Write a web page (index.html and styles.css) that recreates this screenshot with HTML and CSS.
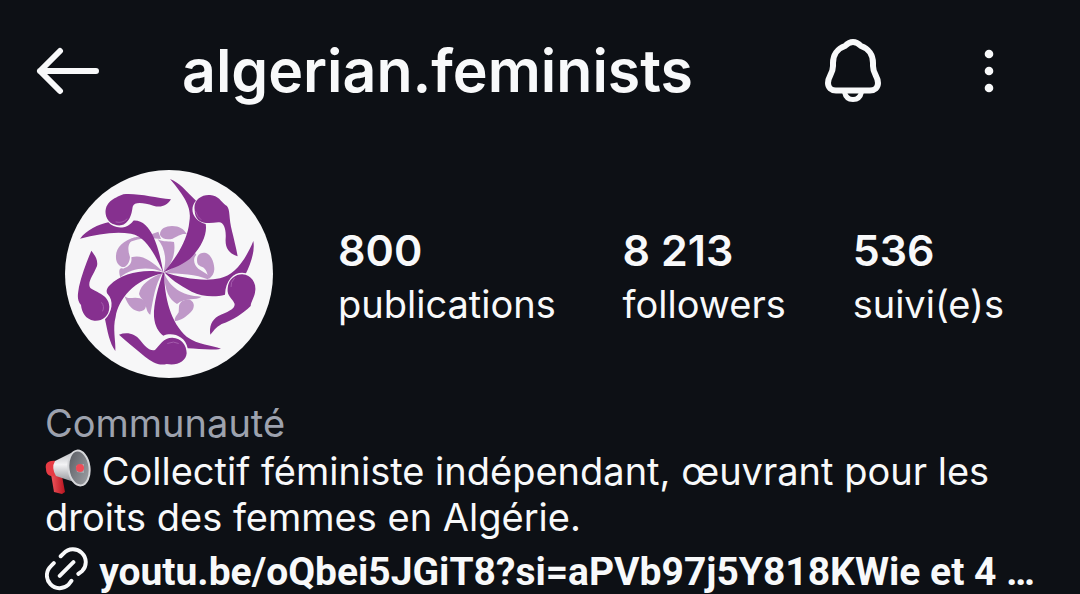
FILE: index.html
```html
<!DOCTYPE html>
<html lang="fr">
<head>
<meta charset="utf-8">
<meta name="viewport" content="width=device-width, initial-scale=1">
<title>algerian.feminists</title>
<link rel="stylesheet" href="styles.css">
</head>
<body>
<header class="topbar">
  <button class="icon-button" type="button" aria-label="Retour">
    <svg class="arrow" viewBox="0 0 64 48"><path d="M24 4 4 24l20 20M4 24h56"/></svg>
  </button>
  <h1 class="username">algerian.feminists</h1>
  <button class="icon-button bell-button" type="button" aria-label="Notifications">
    <svg class="bell" viewBox="0 0 56 64"><path d="M28 3c-3.500 0-5.500 1.500-8 4C12.500 9.500 8 16 8 24v3c0 8-5 10-5 17 0 4.500 3.500 7.500 8 7.500h34c4.500 0 8-3 8-7.500 0-7-5-9-5-17v-3c0-8-4.500-14.500-12-17-2.500-2.500-4.500-4-8-4z"/><path class="clapper" d="M19.500 53c1 5 4 7.500 8.500 7.500s7.500-2.500 8.500-7.500"/></svg>
  </button>
  <button class="icon-button" type="button" aria-label="Plus d’options">
    <svg class="dots" viewBox="0 0 12 44"><circle cx="6" cy="5" r="4.300"/><circle cx="6" cy="22" r="4.300"/><circle cx="6" cy="39" r="4.300"/></svg>
  </button>
</header>
<main class="profile">
  <section class="summary">
    <svg class="avatar" viewBox="30 30 624 624" role="img" aria-label="Photo de profil">
      <circle class="disc" cx="342" cy="342" r="312"/>
      <g class="petals">
        <path d="M325 338C336 300 331 265 308 238 325 247 344 243 357 246 363 280 350 315 325 338Z"/>
        <path d="M315 225C314 206 333 198 351 198 374 198 386 207 396 223 380 219 370 228 353 236 335 241 320 236 315 225Z"/>
        <path d="M329 338C365 322 380 290 420 278L424 284C413 295 416 315 430 326L468 350 458 358C425 342 375 342 329 338Z"/>
        <path d="M426 300C426 282 440 276 453 279 470 285 478 310 478 328 477 341 472 349 462 356 456 340 455 326 440 320 429 316 426 311 426 300Z"/>
        <path d="M327 340C344 378 376 408 440 410 422 423 392 410 366 432 342 418 330 395 327 340Z"/>
        <path d="M372 438C375 422 393 416 405 419 421 427 419 445 407 457 392 471 379 482 360 483 357 474 366 466 371 457Z"/>
        <path d="M322 340C300 375 296 412 286 464 276 458 275 445 271 434 264 417 253 409 252 401 258 373 285 354 322 340Z"/>
        <path d="M209 409C220 420 235 409 255 415 273 421 279 439 267 450 248 462 222 448 209 409Z"/>
        <path d="M324 335C282 319 228 321 196 352 191 336 191 321 204 326 222 321 232 310 229 292 260 282 289 302 324 335Z"/>
        <path d="M183 293C181 264 203 242 241 232 215 250 218 270 225 291 224 310 212 326 199 320 190 315 183 305 183 293Z"/>
        <path d="M214 251C225 235 245 227 264 232L310 215 318 237C280 232 245 234 214 251Z"/>
      </g>
      <g class="dancers">
        <path d="M345 57C372 66 395 95 423 122 402 145 412 181 452 192 458 222 438 265 404 297 375 320 345 326 325 338 365 292 398 240 403 185 409 150 400 121 345 57Z"/>
        <path d="M419 150C414 120 440 103 465 105 490 107 498 124 511 135 526 142 521 165 528 200 536 235 543 260 548 289 520 280 510 262 512 235 514 205 505 184 490 187 465 190 445 192 430 180 422 172 419 162 419 150Z"/>
        <path d="M75 236C95 210 130 193 160 187 178 207 215 210 235 182 262 180 280 200 295 230 311 265 318 300 325 338 300 285 275 230 228 221 180 213 130 222 75 236Z"/>
        <path d="M152 162C149 128 175 115 205 103 250 99 300 114 348 118 335 140 315 143 295 137 265 128 238 124 233 140 230 165 222 190 198 196 175 198 155 185 152 162Z"/>
        <path d="M325 338C270 325 200 340 165 375 151 388 155 398 158 402 177 422 172 456 150 478 157 510 163 550 181 573 183 545 172 505 182 470 190 420 235 359 325 340Z"/>
        <path d="M109 272C118 285 130 298 126 318 115 345 94 370 107 385 125 398 162 405 163 440 163 470 140 484 118 482 90 478 80 455 78 435 65 420 68 405 72 380 80 345 95 305 109 272Z"/>
        <path d="M324 338C310 380 295 430 297 470 300 500 310 515 325 527 350 516 391 526 398 565 430 566 470 572 498 566 470 555 430 555 395 530 348 490 327 410 328 339Z"/>
        <path d="M192 524C215 515 240 520 255 540 270 560 285 575 300 570 315 555 325 533 352 533 380 535 395 555 395 580 393 605 365 618 335 612 310 618 290 605 270 590 240 565 215 545 192 524Z"/>
        <path d="M328 337C380 355 450 365 495 355 535 345 567 310 595 243 601 275 585 315 573 340 545 332 512 353 510 404 480 412 440 410 410 395 370 375 345 355 328 337Z"/>
        <path d="M518 385C520 355 545 342 562 343 590 345 603 370 601 390 600 410 588 425 587 438 565 460 535 480 500 492 480 503 475 515 466 524 462 500 470 480 490 468 515 455 540 450 539 432 533 415 515 410 518 385Z"/>
      </g>
      <g class="shine"><path d="M183 186q20 5 33-9M422 155q4 16 16 24M140 428q10 12 3 25M338 550q18-8 32 0M528 380q-2-14 10-25"/></g>
    </svg>
    <ul class="stats">
      <li><strong>800</strong><span>publications</span></li>
      <li><strong>8 213</strong><span>followers</span></li>
      <li><strong>536</strong><span>suivi(e)s</span></li>
    </ul>
  </section>
  <section class="bio">
    <p class="category">Communauté</p>
    <p class="text"><svg class="megaphone" viewBox="0 0 46 46" role="img" aria-label="Mégaphone">
      <defs>
        <linearGradient id="horn" x1="0" y1="0" x2="0" y2="1"><stop offset="0" stop-color="#b9bbc0"/><stop offset=".4" stop-color="#f3f3f5"/><stop offset="1" stop-color="#84868c"/></linearGradient>
        <linearGradient id="bowl" x1="0" y1="0" x2="1" y2="1"><stop offset="0" stop-color="#55585e"/><stop offset="1" stop-color="#a4a6ab"/></linearGradient>
        <linearGradient id="grip" x1="0" y1="0" x2="1" y2="0"><stop offset="0" stop-color="#f0565d"/><stop offset="1" stop-color="#b7141f"/></linearGradient>
      </defs>
      <path d="M6 25 17 27 20 43 17 45 9 43Z" fill="url(#grip)"/>
      <path d="M11 12C2 11 0 15 1 20c0 6 4 8 10 7Z" fill="#e63b44"/>
      <path d="M10 12 30 2 38 36 11 27Q6 19 10 12Z" fill="url(#horn)"/>
      <ellipse cx="34" cy="19" rx="10.500" ry="17.500" transform="rotate(-7 34 19)" fill="url(#bowl)" stroke="#d6d7da" stroke-width="2"/>
      <path d="M31 17 39 15v9l-7-1Z" fill="#aaadb2"/><circle cx="35" cy="19" r="4" fill="#ef4c57"/>
    </svg> Collectif féministe indépendant, œuvrant pour les droits des femmes en Algérie.</p>
    <a class="link" href="#">
      <svg class="chain" viewBox="0 0 44 44"><path d="M16 9l3-3A12.500 12.500 0 0 1 38 24l-4 3M9 16l-3 3A12.500 12.500 0 0 0 24 38l3-4M15 29 29 15"/></svg>
      <span>youtu.be/oQbei5JGiT8?si=aPVb97j5Y818KWie et 4 …</span>
    </a>
  </section>
</main>
</body>
</html>
```
FILE: styles.css
```css
* {
  box-sizing: border-box;
}

body {
  margin: 0;
  background: #0d1015;
  color: #f8f9fa;
  font-family: Inter, "Liberation Sans", sans-serif;
  overflow: hidden;
}

h1,
p,
ul {
  margin: 0;
  padding: 0;
}

svg {
  display: block;
  fill: none;
  stroke-linecap: round;
  stroke-linejoin: round;
}

.topbar {
  display: flex;
  align-items: center;
  height: 142px;
  padding: 0 85px 0 36px;
}

.icon-button {
  display: block;
  padding: 0;
  border: 0;
  background: none;
  color: inherit;
}

.arrow {
  width: 64px;
  height: 48px;
  stroke: currentColor;
  stroke-width: 6;
}

.username {
  flex: 1;
  padding-left: 82px;
  font-size: 59px;
  font-weight: 600;
  line-height: 72px;
}

.bell-button {
  margin-right: 102px;
}

.bell {
  width: 56px;
  height: 64px;
  stroke: currentColor;
  stroke-width: 6;
}

.clapper {
  stroke-width: 5;
}

.dots {
  width: 12px;
  height: 44px;
  fill: currentColor;
}

.summary {
  display: flex;
  align-items: center;
  gap: 65px;
  padding: 28px 76px 0 65px;
}

.avatar {
  flex: none;
  width: 208px;
  height: 208px;
}

.disc {
  fill: #f7f7f8;
}

.petals {
  fill: #bf98c8;
}

.dancers {
  fill: #86308f;
}

.shine {
  stroke: #a45bac;
  stroke-width: 3;
}

.stats {
  display: flex;
  flex: 1;
  justify-content: space-between;
  padding-top: 5px;
  list-style: none;
}

.stats strong,
.stats span {
  display: block;
  white-space: nowrap;
}

.stats strong {
  font-size: 43px;
  font-weight: 600;
  line-height: 54px;
}

.stats span {
  font-size: 38px;
  line-height: 54px;
}

.bio {
  padding: 21px 45px 0;
  font-size: 38px;
}

.category {
  color: #9da2ae;
  line-height: 48px;
}

.text {
  margin-top: 2px;
  line-height: 45px;
}

.megaphone {
  display: inline-block;
  width: 46px;
  height: 46px;
  vertical-align: -10px;
}

.link {
  display: flex;
  align-items: center;
  gap: 11px;
  margin-top: 7px;
  color: inherit;
  font: 700 39px/46px Roboto, sans-serif;
  text-decoration: none;
  white-space: nowrap;
}

.chain {
  width: 44px;
  height: 44px;
  margin-bottom: 6px;
  stroke: currentColor;
  stroke-width: 4;
}
```
